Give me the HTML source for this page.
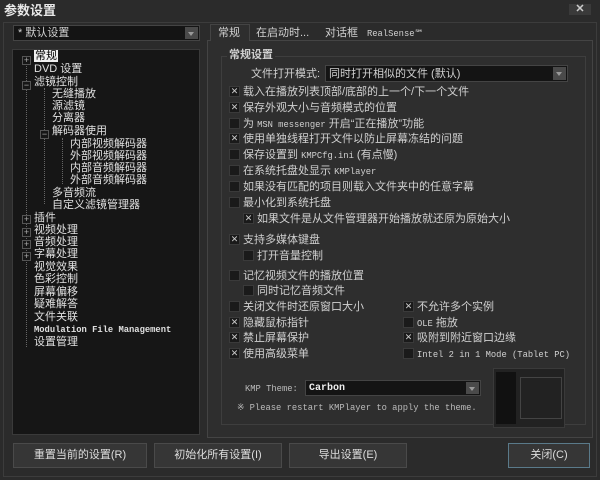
<!DOCTYPE html>
<html><head><meta charset="utf-8"><style>
*{margin:0;padding:0;box-sizing:border-box}
body{width:600px;height:480px;background:#2b2b2b;font-family:"Liberation Sans","Noto Sans CJK SC",sans-serif;font-size:11px;color:#d0d0d0;position:relative;overflow:hidden}
.a{position:absolute;white-space:nowrap;line-height:12px}
.frame{position:absolute;left:3px;top:22px;width:594px;height:455px;border:1px solid #3c3c3c}
.tree{position:absolute;left:12px;top:49px;width:188px;height:386px;background:#161616;border:1px solid #3a3a3a;color:#e0e0e0}
.combo{position:absolute;background:#141414;border:1px solid #444}
.dd{position:absolute;right:1px;top:1px;width:13px;bottom:1px;background:#4a4a4a}
.dd:after{content:"";position:absolute;left:3px;top:5px;border:3px solid transparent;border-top:4px solid #999}
.cb{position:absolute;width:11px;height:11px;background:#1a1a1a;border:1px solid #3a3a3a;font-size:9px;line-height:9px;text-align:center;color:#ccc}
.btn{position:absolute;top:443px;height:25px;background:#363636;border:1px solid #4a4a4a;text-align:center;line-height:23px;color:#ddd}
.ln{position:absolute;border-left:1px dotted #666}
.pm{position:absolute;width:9px;height:9px;border:1px solid #555;font-size:9px;line-height:7px;text-align:center;color:#aaa;background:#161616}
.mono{font-family:"Liberation Mono",monospace;font-size:8.8px}
</style></head><body>
<div class="a" style="left:4px;top:3px;font-size:13px;font-weight:bold;color:#e8e8e8;line-height:16px">参数设置</div>
<div style="position:absolute;left:569px;top:4px;width:22px;height:11px;background:#3a3a3a;color:#ccc;text-align:center;font-size:11px;line-height:11px;font-weight:bold">✕</div>
<div class="frame"></div>
<div class="combo" style="left:13px;top:25px;width:187px;height:16px"><span class="a" style="left:4px;top:1px">* 默认设置</span><div class="dd"></div></div>
<div class="tree">
<div class="ln" style="left:13px;top:10px;height:287px"></div>
<div class="ln" style="left:31px;top:38px;height:116px"></div>
<div class="ln" style="left:49px;top:88px;height:46px"></div>
<div class="pm" style="left:9px;top:6px">+</div>
<div class="pm" style="left:9px;top:31px">−</div>
<div class="pm" style="left:27px;top:80px">−</div>
<div class="pm" style="left:9px;top:165px">+</div><div class="pm" style="left:9px;top:178px">+</div><div class="pm" style="left:9px;top:190px">+</div><div class="pm" style="left:9px;top:202px">+</div>
<div class="a" style="left:21px;top:0px;background:#f0f0f0;color:#000;padding:0 1px">常规</div>
<div class="a" style="left:21px;top:13px">DVD 设置</div>
<div class="a" style="left:21px;top:26px">滤镜控制</div>
<div class="a" style="left:39px;top:38px">无缝播放</div>
<div class="a" style="left:39px;top:50px">源滤镜</div>
<div class="a" style="left:39px;top:62px">分离器</div>
<div class="a" style="left:39px;top:75px">解码器使用</div>
<div class="a" style="left:57px;top:88px">内部视频解码器</div>
<div class="a" style="left:57px;top:100px">外部视频解码器</div>
<div class="a" style="left:57px;top:112px">内部音频解码器</div>
<div class="a" style="left:57px;top:124px">外部音频解码器</div>
<div class="a" style="left:39px;top:137px">多音频流</div>
<div class="a" style="left:39px;top:149px">自定义滤镜管理器</div>
<div class="a" style="left:21px;top:162px">插件</div>
<div class="a" style="left:21px;top:174px">视频处理</div>
<div class="a" style="left:21px;top:186px">音频处理</div>
<div class="a" style="left:21px;top:198px">字幕处理</div>
<div class="a" style="left:21px;top:211px">视觉效果</div>
<div class="a" style="left:21px;top:223px">色彩控制</div>
<div class="a" style="left:21px;top:236px">屏幕偏移</div>
<div class="a" style="left:21px;top:248px">疑难解答</div>
<div class="a" style="left:21px;top:261px">文件关联</div>
<div class="a mono" style="left:21px;top:274px;font-weight:bold">Modulation File Management</div>
<div class="a" style="left:21px;top:286px">设置管理</div>
</div>
<!-- tabs -->
<div style="position:absolute;left:207px;top:40px;width:386px;height:398px;border:1px solid #444;background:#2e2e2e"></div>
<div style="position:absolute;left:210px;top:24px;width:40px;height:17px;background:#2e2e2e;border:1px solid #444;border-bottom:none"></div>
<div class="a" style="left:218px;top:27px">常规</div>
<div class="a" style="left:256px;top:27px">在启动时...</div>
<div class="a" style="left:325px;top:27px">对话框</div>
<div class="a mono" style="left:367px;top:28px">RealSense℠</div>
<div style="position:absolute;left:221px;top:56px;width:365px;height:369px;border:1px solid #3e3e3e"></div>
<div class="a" style="left:227px;top:49px;background:#2e2e2e;padding:0 2px;font-weight:bold">常规设置</div>
<div class="a" style="left:251px;top:68px">文件打开模式:</div>
<div class="combo" style="left:325px;top:65px;width:243px;height:17px"><span class="a" style="left:3px;top:2px">同时打开相似的文件 (默认)</span><div class="dd"></div></div>

<div class="cb" style="left:229px;top:86px">✕</div><div class="a" style="left:243px;top:86px">载入在播放列表顶部/底部的上一个/下一个文件</div>
<div class="cb" style="left:229px;top:102px">✕</div><div class="a" style="left:243px;top:102px">保存外观大小与音频模式的位置</div>
<div class="cb" style="left:229px;top:118px"></div><div class="a" style="left:243px;top:118px">为 <span class="mono">MSN messenger</span> 开启“正在播放”功能</div>
<div class="cb" style="left:229px;top:133px">✕</div><div class="a" style="left:243px;top:133px">使用单独线程打开文件以防止屏幕冻结的问题</div>
<div class="cb" style="left:229px;top:149px"></div><div class="a" style="left:243px;top:149px">保存设置到 <span class="mono">KMPCfg.ini</span> (有点慢)</div>
<div class="cb" style="left:229px;top:165px"></div><div class="a" style="left:243px;top:165px">在系统托盘处显示 <span class="mono">KMPlayer</span></div>
<div class="cb" style="left:229px;top:181px"></div><div class="a" style="left:243px;top:181px">如果没有匹配的项目则载入文件夹中的任意字幕</div>
<div class="cb" style="left:229px;top:197px"></div><div class="a" style="left:243px;top:197px">最小化到系统托盘</div>
<div class="cb" style="left:243px;top:213px">✕</div><div class="a" style="left:257px;top:213px">如果文件是从文件管理器开始播放就还原为原始大小</div>
<div class="cb" style="left:229px;top:234px">✕</div><div class="a" style="left:243px;top:234px">支持多媒体键盘</div>
<div class="cb" style="left:243px;top:250px"></div><div class="a" style="left:257px;top:250px">打开音量控制</div>
<div class="cb" style="left:229px;top:270px"></div><div class="a" style="left:243px;top:270px">记忆视频文件的播放位置</div>
<div class="cb" style="left:243px;top:285px"></div><div class="a" style="left:257px;top:285px">同时记忆音频文件</div>
<div class="cb" style="left:229px;top:301px"></div><div class="a" style="left:243px;top:301px">关闭文件时还原窗口大小</div>
<div class="cb" style="left:229px;top:317px">✕</div><div class="a" style="left:243px;top:317px">隐藏鼠标指针</div>
<div class="cb" style="left:229px;top:332px">✕</div><div class="a" style="left:243px;top:332px">禁止屏幕保护</div>
<div class="cb" style="left:229px;top:348px">✕</div><div class="a" style="left:243px;top:348px">使用高级菜单</div>
<div class="cb" style="left:403px;top:301px">✕</div><div class="a" style="left:417px;top:301px">不允许多个实例</div>
<div class="cb" style="left:403px;top:317px"></div><div class="a" style="left:417px;top:317px"><span class="mono">OLE</span> 拖放</div>
<div class="cb" style="left:403px;top:332px">✕</div><div class="a" style="left:417px;top:332px">吸附到附近窗口边缘</div>
<div class="cb" style="left:403px;top:348px"></div><div class="a mono" style="left:417px;top:349px">Intel 2 in 1 Mode (Tablet PC)</div>
<div class="a mono" style="left:245px;top:383px;color:#bbb">KMP Theme:</div>
<div class="combo" style="left:305px;top:380px;width:176px;height:16px"><span class="a mono" style="left:3px;top:2px;font-weight:bold;color:#eee;font-size:10px">Carbon</span><div class="dd"></div></div>
<div class="a mono" style="left:237px;top:402px;color:#bbb">※ Please restart KMPlayer to apply the theme.</div>
<div style="position:absolute;left:493px;top:368px;width:72px;height:60px;background:#222;border:1px solid #3a3a3a">
<div style="position:absolute;left:2px;top:3px;width:20px;height:52px;background:#111"></div>
<div style="position:absolute;left:26px;top:8px;width:42px;height:42px;border:1px solid #444"></div>
</div>
<div class="btn" style="left:13px;width:134px">重置当前的设置(R)</div>
<div class="btn" style="left:154px;width:128px">初始化所有设置(I)</div>
<div class="btn" style="left:289px;width:118px">导出设置(E)</div>
<div class="btn" style="left:508px;width:82px;border-color:#5a7a8a">关闭(C)</div>
</body></html>
